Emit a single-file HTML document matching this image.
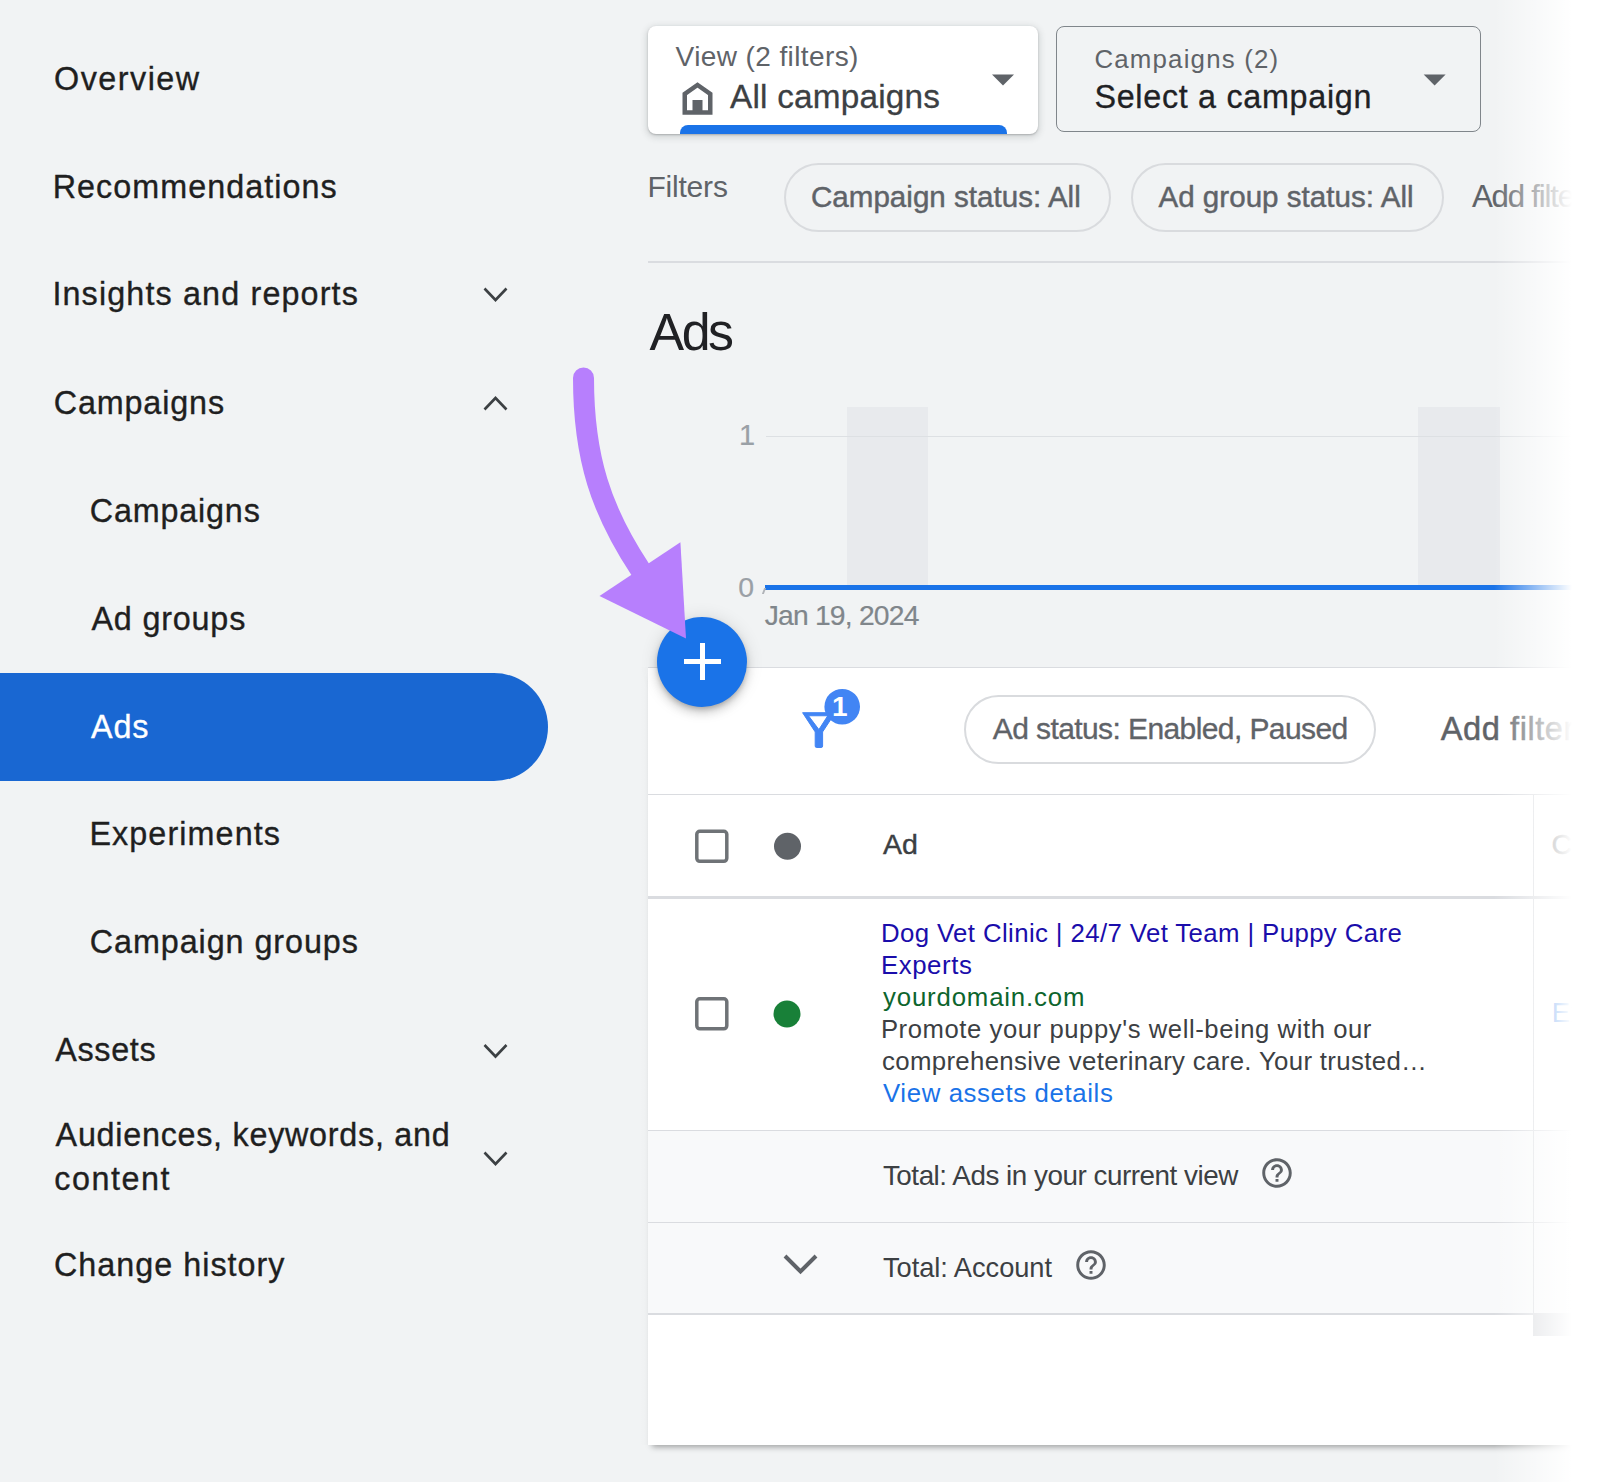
<!DOCTYPE html>
<html><head><meta charset="utf-8">
<style>
html,body{margin:0;padding:0;}
body{width:1600px;height:1482px;overflow:hidden;position:relative;background:#f1f3f4;font-family:"Liberation Sans",sans-serif;}
.t{position:absolute;white-space:nowrap;}
.abs{position:absolute;}
</style></head>
<body>
<!-- active pill -->
<div class="abs" style="left:0;top:673px;width:548px;height:107.5px;background:#1967d2;border-radius:0 54px 54px 0;"></div>

<!-- sidebar chevrons -->
<svg class="abs" style="left:0;top:0;" width="600" height="1482">
  <g fill="none" stroke="#3c4043" stroke-width="2.6" stroke-linecap="butt">
    <polyline points="484.5,288.5 495.5,300 506.5,288.5"/>
    <polyline points="484.5,409.5 495.5,398 506.5,409.5"/>
    <polyline points="484.5,1045 495.5,1056.5 506.5,1045"/>
    <polyline points="484.5,1152.5 495.5,1164 506.5,1152.5"/>
  </g>
</svg>

<!-- view card -->
<div class="abs" style="left:648px;top:26px;width:390px;height:107.5px;background:#fff;border-radius:8px;box-shadow:0 1px 2px rgba(60,64,67,.3),0 2px 6px 2px rgba(60,64,67,.15);overflow:hidden;">
  <div class="abs" style="left:32px;top:98.5px;width:327px;height:20px;background:#1a73e8;border-radius:8px 8px 0 0;"></div>
</div>
<svg class="abs" style="left:640px;top:20px;" width="420" height="120">
  <!-- house -->
  <path d="M44.75,92.5 V74 L57.5,65 L70.25,74 V92.5 Z" fill="none" stroke="#5f6368" stroke-width="4.5" stroke-linejoin="miter"/>
  <rect x="52.5" y="80" width="10" height="12.5" fill="#5f6368"/>
  <!-- triangle -->
  <polygon points="352,54.4 374,54.4 363,65.6" fill="#5f6368"/>
</svg>

<!-- campaigns card -->
<div class="abs" style="left:1056px;top:26px;width:422.8px;height:103.8px;border:1.6px solid #80868b;border-radius:8px;"></div>
<svg class="abs" style="left:1400px;top:60px;" width="60" height="40">
  <polygon points="23.7,14.4 45.6,14.4 34.65,25.6" fill="#5f6368"/>
</svg>

<!-- filter chips -->
<div class="abs" style="left:783.5px;top:162.5px;width:323.5px;height:65px;border:2px solid #d9dbde;border-radius:36px;"></div>
<div class="abs" style="left:1130.5px;top:162.5px;width:309px;height:65px;border:2px solid #d9dbde;border-radius:36px;"></div>
<div class="abs" style="left:648px;top:261px;width:940px;height:2px;background:#dadce0;"></div>

<!-- chart -->
<div class="abs" style="left:847px;top:407px;width:81px;height:178px;background:#e8eaed;"></div>
<div class="abs" style="left:1418px;top:407px;width:82px;height:178px;background:#e8eaed;"></div>
<div class="abs" style="left:766px;top:435.5px;width:830px;height:1.5px;background:#dde0e3;"></div>
<div class="abs" style="left:765px;top:585px;width:830px;height:4.5px;background:#1a73e8;"></div>
<div class="abs" style="left:763px;top:588px;width:2px;height:6px;background:#b0b3b8;transform:skewX(-20deg);"></div>

<!-- table card -->
<div class="abs" style="left:648px;top:666.5px;width:960px;height:778.5px;background:#fff;box-shadow:0 6px 6px -4px rgba(0,0,0,.35);border-top:1px solid #dadce0;box-sizing:border-box;"></div>
<div class="abs" style="left:640px;top:667px;width:8px;height:778px;background:linear-gradient(to right,rgba(0,0,0,0),rgba(0,0,0,.012));"></div>
<!-- table filter chip -->
<div class="abs" style="left:963.5px;top:694.5px;width:408.5px;height:65px;border:2px solid #d9dbde;border-radius:36px;"></div>
<div class="abs" style="left:648px;top:793.5px;width:960px;height:1.5px;background:#dadce0;"></div>
<div class="abs" style="left:648px;top:896px;width:960px;height:3px;background:#dadce0;"></div>
<!-- totals rows -->
<div class="abs" style="left:648px;top:1130px;width:960px;height:184px;background:#f8f9fa;"></div>
<div class="abs" style="left:648px;top:1129.5px;width:960px;height:1.5px;background:#dadce0;"></div>
<div class="abs" style="left:648px;top:1221.5px;width:960px;height:1.5px;background:#dadce0;"></div>
<div class="abs" style="left:648px;top:1313px;width:960px;height:1.5px;background:#dadce0;"></div>
<div class="abs" style="left:1532.5px;top:795px;width:1.5px;height:519px;background:#dadce0;"></div>
<div class="abs" style="left:1533px;top:1314px;width:60px;height:22px;background:#dadce0;"></div>
<div class="abs" style="left:1533px;top:1314px;width:60px;height:22px;background:#dadce0;"></div>

<svg class="abs" style="left:640px;top:660px;" width="900" height="660">
  <!-- checkbox header -->
  <rect x="56.8" y="171.3" width="30" height="30" rx="3" fill="none" stroke="#6f7377" stroke-width="3.5"/>
  <circle cx="147.5" cy="186.3" r="13.5" fill="#5f6368"/>
  <!-- row checkbox -->
  <rect x="56.8" y="338.8" width="30" height="30" rx="3" fill="none" stroke="#6f7377" stroke-width="3.5"/>
  <circle cx="147" cy="354" r="13.5" fill="#188038"/>
  <!-- filter icon -->
  <path fill-rule="evenodd" fill="#4285f4" stroke="#4285f4" stroke-width="1" stroke-linejoin="round" d="M162.6,52.7 L195.2,52.7 L182.6,71.9 V86 Q182.6,87.5 181.1,87.5 H176.7 Q175.2,87.5 175.2,86 V71.9 Z M168.5,55.75 L187.75,55.75 L178.9,69.6 Z"/>
  <circle cx="202.2" cy="46.7" r="17.8" fill="#4285f4"/>
  <text x="199.7" y="56.25" style="font-family:'Liberation Sans';font-weight:700;font-size:28px" fill="#fff" text-anchor="middle">1</text>
  <!-- chevron total -->
  <polyline points="145,596 160.5,611.5 176,596" fill="none" stroke="#5f6368" stroke-width="4"/>
  <!-- help icons -->
  <path transform="translate(619.3,495.3) scale(1.475)" fill="#5f6368" d="M11 18h2v-2h-2v2zm1-16C6.48 2 2 6.48 2 12s4.48 10 10 10 10-4.48 10-10S17.52 2 12 2zm0 18c-4.41 0-8-3.59-8-8s3.59-8 8-8 8 3.59 8 8-3.59 8-8 8zm0-14c-2.21 0-4 1.79-4 4h2c0-1.1.9-2 2-2s2 .9 2 2c0 2-3 1.75-3 5h2c0-2.25 3-2.5 3-5 0-2.21-1.79-4-4-4z"/>
  <path transform="translate(433.3,587.3) scale(1.475)" fill="#5f6368" d="M11 18h2v-2h-2v2zm1-16C6.48 2 2 6.48 2 12s4.48 10 10 10 10-4.48 10-10S17.52 2 12 2zm0 18c-4.41 0-8-3.59-8-8s3.59-8 8-8 8 3.59 8 8-3.59 8-8 8zm0-14c-2.21 0-4 1.79-4 4h2c0-1.1.9-2 2-2s2 .9 2 2c0 2-3 1.75-3 5h2c0-2.25 3-2.5 3-5 0-2.21-1.79-4-4-4z"/>
</svg>

<div class="t" style="left:54.01px;top:62.64px;font-size:32.32px;line-height:32.32px;letter-spacing:1.493px;color:#1f1f1f;font-weight:400;-webkit-text-stroke:0.35px #1f1f1f;">Overview</div>
<div class="t" style="left:52.71px;top:170.74px;font-size:32.32px;line-height:32.32px;letter-spacing:1.043px;color:#1f1f1f;font-weight:400;-webkit-text-stroke:0.35px #1f1f1f;">Recommendations</div>
<div class="t" style="left:52.39px;top:278.04px;font-size:32.32px;line-height:32.32px;letter-spacing:1.144px;color:#1f1f1f;font-weight:400;-webkit-text-stroke:0.35px #1f1f1f;">Insights and reports</div>
<div class="t" style="left:53.68px;top:386.64px;font-size:32.32px;line-height:32.32px;letter-spacing:0.877px;color:#1f1f1f;font-weight:400;-webkit-text-stroke:0.35px #1f1f1f;">Campaigns</div>
<div class="t" style="left:89.78px;top:494.54px;font-size:32.32px;line-height:32.32px;letter-spacing:0.827px;color:#1f1f1f;font-weight:400;-webkit-text-stroke:0.35px #1f1f1f;">Campaigns</div>
<div class="t" style="left:91.40px;top:602.94px;font-size:32.32px;line-height:32.32px;letter-spacing:0.830px;color:#1f1f1f;font-weight:400;-webkit-text-stroke:0.35px #1f1f1f;">Ad groups</div>
<div class="t" style="left:91.00px;top:710.64px;font-size:32.32px;line-height:32.32px;letter-spacing:0.890px;color:#ffffff;font-weight:400;-webkit-text-stroke:0.35px #ffffff;">Ads</div>
<div class="t" style="left:89.41px;top:817.94px;font-size:32.32px;line-height:32.32px;letter-spacing:1.094px;color:#1f1f1f;font-weight:400;-webkit-text-stroke:0.35px #1f1f1f;">Experiments</div>
<div class="t" style="left:89.78px;top:925.64px;font-size:32.32px;line-height:32.32px;letter-spacing:0.934px;color:#1f1f1f;font-weight:400;-webkit-text-stroke:0.35px #1f1f1f;">Campaign groups</div>
<div class="t" style="left:55.30px;top:1033.64px;font-size:32.32px;line-height:32.32px;letter-spacing:0.676px;color:#1f1f1f;font-weight:400;-webkit-text-stroke:0.35px #1f1f1f;">Assets</div>
<div class="t" style="left:55.60px;top:1118.54px;font-size:32.32px;line-height:32.32px;letter-spacing:0.737px;color:#1f1f1f;font-weight:400;-webkit-text-stroke:0.35px #1f1f1f;">Audiences, keywords, and</div>
<div class="t" style="left:54.31px;top:1163.24px;font-size:32.32px;line-height:32.32px;letter-spacing:1.535px;color:#1f1f1f;font-weight:400;-webkit-text-stroke:0.35px #1f1f1f;">content</div>
<div class="t" style="left:53.98px;top:1249.04px;font-size:32.32px;line-height:32.32px;letter-spacing:1.011px;color:#1f1f1f;font-weight:400;-webkit-text-stroke:0.35px #1f1f1f;">Change history</div>
<div class="t" style="left:675.60px;top:42.51px;font-size:28.04px;line-height:28.04px;letter-spacing:0.384px;color:#5f6368;font-weight:400;">View (2 filters)</div>
<div class="t" style="left:730.00px;top:79.78px;font-size:33.33px;line-height:33.33px;letter-spacing:0.208px;color:#3c4043;font-weight:400;-webkit-text-stroke:0.3px #3c4043;">All campaigns</div>
<div class="t" style="left:1094.41px;top:46.85px;font-size:25.87px;line-height:25.87px;letter-spacing:1.184px;color:#5f6368;font-weight:400;">Campaigns (2)</div>
<div class="t" style="left:1094.41px;top:80.94px;font-size:32.32px;line-height:32.32px;letter-spacing:0.701px;color:#202124;font-weight:400;-webkit-text-stroke:0.3px #202124;">Select a campaign</div>
<div class="t" style="left:647.40px;top:171.81px;font-size:30.00px;line-height:30.00px;letter-spacing:-0.194px;color:#5f6368;font-weight:400;">Filters</div>
<div class="t" style="left:810.92px;top:181.97px;font-size:29.57px;line-height:29.57px;letter-spacing:0.020px;color:#5f6368;font-weight:400;-webkit-text-stroke:0.45px #5f6368;">Campaign status: All</div>
<div class="t" style="left:1158.40px;top:181.87px;font-size:29.57px;line-height:29.57px;letter-spacing:0.025px;color:#5f6368;font-weight:400;-webkit-text-stroke:0.45px #5f6368;">Ad group status: All</div>
<div class="t" style="left:1471.90px;top:180.62px;font-size:31.16px;line-height:31.16px;letter-spacing:-1.162px;color:#5f6368;font-weight:400;-webkit-text-stroke:0.15px #5f6368;">Add filter</div>
<div class="t" style="left:649.60px;top:307.48px;font-size:51.88px;line-height:51.88px;letter-spacing:-2.524px;color:#202124;font-weight:400;">Ads</div>
<div class="t" style="left:738.97px;top:421.46px;font-size:28.99px;line-height:28.99px;letter-spacing:0.000px;color:#9aa0a6;font-weight:400;-webkit-text-stroke:0.2px #9aa0a6;">1</div>
<div class="t" style="left:738.15px;top:572.95px;font-size:28.41px;line-height:28.41px;letter-spacing:0.000px;color:#9aa0a6;font-weight:400;-webkit-text-stroke:0.2px #9aa0a6;">0</div>
<div class="t" style="left:764.72px;top:601.48px;font-size:28.26px;line-height:28.26px;letter-spacing:-0.791px;color:#80868b;font-weight:400;-webkit-text-stroke:0.2px #80868b;">Jan 19, 2024</div>
<div class="t" style="left:992.80px;top:713.51px;font-size:30.00px;line-height:30.00px;letter-spacing:-0.595px;color:#5f6368;font-weight:400;-webkit-text-stroke:0.35px #5f6368;">Ad status: Enabled, Paused</div>
<div class="t" style="left:1440.70px;top:713.40px;font-size:32.61px;line-height:32.61px;letter-spacing:0.560px;color:#5f6368;font-weight:400;-webkit-text-stroke:0.45px #5f6368;">Add filter</div>
<div class="t" style="left:883.00px;top:830.33px;font-size:28.55px;line-height:28.55px;letter-spacing:0.000px;color:#3c4043;font-weight:400;-webkit-text-stroke:0.4px #3c4043;">Ad</div>
<div class="t" style="left:880.94px;top:920.96px;font-size:25.80px;line-height:25.80px;letter-spacing:0.382px;color:#1a0dab;font-weight:400;">Dog Vet Clinic | 24/7 Vet Team | Puppy Care</div>
<div class="t" style="left:880.94px;top:952.86px;font-size:25.80px;line-height:25.80px;letter-spacing:0.564px;color:#1a0dab;font-weight:400;">Experts</div>
<div class="t" style="left:883.00px;top:984.76px;font-size:25.80px;line-height:25.80px;letter-spacing:0.825px;color:#0d652d;font-weight:400;">yourdomain.com</div>
<div class="t" style="left:880.95px;top:1017.29px;font-size:25.65px;line-height:25.65px;letter-spacing:0.574px;color:#3c4043;font-weight:400;">Promote your puppy's well-being with our</div>
<div class="t" style="left:881.97px;top:1049.16px;font-size:25.80px;line-height:25.80px;letter-spacing:0.334px;color:#3c4043;font-weight:400;">comprehensive veterinary care. Your trusted…</div>
<div class="t" style="left:883.00px;top:1081.06px;font-size:25.80px;line-height:25.80px;letter-spacing:0.604px;color:#1a73e8;font-weight:400;">View assets details</div>
<div class="t" style="left:1551.57px;top:830.33px;font-size:28.55px;line-height:28.55px;letter-spacing:0.000px;color:#5f6368;font-weight:400;-webkit-text-stroke:0.4px #5f6368;">Ca</div>
<div class="t" style="left:1551.80px;top:998.69px;font-size:27.54px;line-height:27.54px;letter-spacing:0.000px;color:#1a73e8;font-weight:400;">Ex</div>
<div class="t" style="left:882.94px;top:1162.15px;font-size:27.83px;line-height:27.83px;letter-spacing:-0.478px;color:#3c4043;font-weight:400;">Total: Ads in your current view</div>
<div class="t" style="left:882.96px;top:1253.64px;font-size:27.25px;line-height:27.25px;letter-spacing:-0.043px;color:#3c4043;font-weight:400;">Total: Account</div>

<!-- FAB -->
<div class="abs" style="left:657px;top:617px;width:90px;height:90px;border-radius:50%;background:#1a73e8;box-shadow:0 3px 5px -1px rgba(0,0,0,.2),0 6px 10px 0 rgba(0,0,0,.14),0 1px 18px 0 rgba(0,0,0,.12);"></div>
<div class="abs" style="left:684px;top:659px;width:37px;height:5px;background:#fff;"></div>
<div class="abs" style="left:699.5px;top:643px;width:5.5px;height:37px;background:#fff;"></div>

<!-- purple arrow -->
<svg class="abs" style="left:0;top:0;" width="760" height="700">
  <path d="M583.5,378 C583.5,458 601.4,510.6 640,569" fill="none" stroke="#b77ffd" stroke-width="21" stroke-linecap="round"/>
  <polygon points="680.4,542.3 599.5,596 686,638.5" fill="#b77ffd"/>
</svg>

<!-- right fade -->
<div class="abs" style="left:1494px;top:0;width:106px;height:1482px;background:linear-gradient(to right,rgba(255,255,255,0) 0px,#fff 78px,#fff 106px);"></div>
</body></html>
